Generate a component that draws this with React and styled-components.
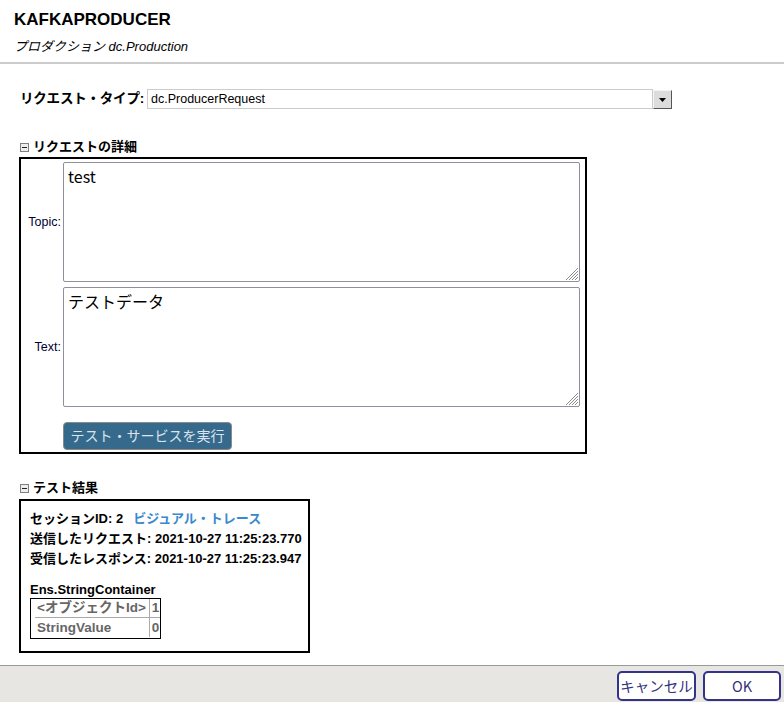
import React from "react";
import styled, { createGlobalStyle } from "styled-components";

const FONT = `"Liberation Sans", "Noto Sans CJK JP", sans-serif`;

const Global = createGlobalStyle`
  html, body { margin: 0; padding: 0; background: #fff; }
  body { font-family: ${FONT}; color: #000; }
  * { box-sizing: border-box; }
`;

const Page = styled.div`
  min-height: 100vh;
  display: flex;
  flex-direction: column;
`;

const Header = styled.header`
  padding: 9px 14px 7px;
  border-bottom: 2px solid #cccccc;
`;

const Title = styled.h1`
  margin: 0;
  font: bold 17px/22px ${FONT};
`;

const Subtitle = styled.div`
  margin-top: 7px;
  font: italic 13px/17px ${FONT};
`;

const Main = styled.main`
  flex: 1;
  padding: 25px 19px 0;
`;

const TypeRow = styled.div`
  display: flex;
  align-items: center;
  height: 20px;
`;

const TypeLabel = styled.span`
  margin-left: 1px;
  margin-right: 3px;
  font: bold 13.5px/20px ${FONT};
  letter-spacing: -0.2px;
`;

const Select = styled.div`
  width: 506px;
  height: 20px;
  border: 1px solid #cccccc;
  padding-left: 3px;
  display: flex;
  align-items: center;
  font: 12.5px/18px ${FONT};
`;

const DropButton = styled.div`
  width: 19px;
  height: 19px;
  margin-top: 1px;
  background: #dcdcdc;
  border-top: 1px solid #f4f4f4;
  border-left: 1px solid #f4f4f4;
  border-right: 1px solid #555;
  border-bottom: 1px solid #555;
  display: flex;
  align-items: center;
  justify-content: center;
`;

const SectionHeader = styled.div`
  display: flex;
  align-items: center;
  gap: 4px;
  margin-top: ${(p) => p.$top}px;
  margin-bottom: ${(p) => p.$bottom}px;
  margin-left: 1px;
  font: bold 13px/16px ${FONT};
`;

const DetailBox = styled.div`
  width: 568px;
  border: 2px solid #000;
  padding: 3px 5px 2px 0;
  display: grid;
  grid-template-columns: 40px 517px;
  column-gap: 2px;
  row-gap: 5px;
  align-items: center;
`;

const FieldLabel = styled.label`
  text-align: right;
  font: 12.5px/14px ${FONT};
  color: #000033;
`;

const AreaWrap = styled.div`
  position: relative;
  height: 120px;
`;

const Area = styled.textarea`
  display: block;
  width: 100%;
  height: 120px;
  border: 1px solid #8f8f9d;
  border-radius: 2px;
  padding: 3px 4px;
  font: 16px/20px "Noto Sans CJK JP", "DejaVu Sans", sans-serif;
  color: #000;
  resize: none;
  outline: none;
`;

const Grip = styled.svg`
  position: absolute;
  right: 2px;
  bottom: 2px;
  pointer-events: none;
`;

const RunButton = styled.button`
  grid-column: 2;
  justify-self: start;
  margin-top: 10px;
  width: 169px;
  height: 28px;
  background: #356a8d;
  border: 1px solid #8a8a8a;
  border-radius: 4px;
  color: #dce3ea;
  font: 14px/18px ${FONT};
  padding: 0;
`;

const ResultBox = styled.div`
  width: 291px;
  border: 2px solid #000;
  padding: 8px 10px 12px 9px;
`;

const Line = styled.div`
  font: bold 13px/20px ${FONT};
  white-space: nowrap;
`;

const Link = styled.a`
  margin-left: 10px;
  color: #3a89cf;
  text-decoration: none;
  font-weight: bold;
`;

const ClassName = styled.div`
  margin-top: 13px;
  font: bold 13px/16px ${FONT};
`;

const PropTable = styled.table`
  border: 1px solid #000;
  border-spacing: 0;
  padding: 0 0 1px 4px;
`;

const Cell = styled.td`
  height: 19px;
  padding: 0 ${(p) => (p.$value ? "1px" : "3px")} 0 2px;
  font: bold 13.5px/18px ${FONT};
  color: #666;
  white-space: nowrap;
  border-right: ${(p) => (p.$value ? "none" : "1px solid #aaa")};
  border-bottom: ${(p) => (p.$first ? "1px solid #aaa" : "none")};
`;

const Footer = styled.footer`
  border-top: 1px solid #999;
  background: #e8e6e2;
  padding: 5px 3px 1px;
  display: flex;
  justify-content: flex-end;
  gap: 7px;
`;

const FooterButton = styled.button`
  width: ${(p) => p.$w}px;
  height: 30px;
  border: 2px solid #33338a;
  border-radius: 5px;
  background: #fff;
  color: #33337a;
  font: 14.5px/18px "Noto Sans CJK JP", ${FONT};
  padding: 0;
  white-space: nowrap;
  overflow: hidden;
`;

const MinusIcon = () => (
  <svg width="9" height="9" viewBox="0 0 9 9">
    <rect x="0.5" y="0.5" width="8" height="8" fill="#eeeeee" stroke="#808080" />
    <rect x="2" y="4" width="5" height="1" fill="#222" />
  </svg>
);

const GripIcon = () => (
  <Grip width="13" height="13" viewBox="0 0 13 13">
    <g stroke="#8a8a8a" strokeWidth="1">
      <line x1="1" y1="13" x2="13" y2="1" />
      <line x1="4" y1="13" x2="13" y2="4" />
      <line x1="7" y1="13" x2="13" y2="7" />
      <line x1="10" y1="13" x2="13" y2="10" />
    </g>
  </Grip>
);

export default function App() {
  return (
    <Page>
      <Global />
      <Header>
        <Title>KAFKAPRODUCER</Title>
        <Subtitle>プロダクション dc.Production</Subtitle>
      </Header>
      <Main>
        <TypeRow>
          <TypeLabel>リクエスト・タイプ:</TypeLabel>
          <Select>dc.ProducerRequest</Select>
          <DropButton>
            <svg width="9" height="6" viewBox="0 0 9 6">
              <path d="M1 1 H8 L4.5 5 Z" fill="#000" />
            </svg>
          </DropButton>
        </TypeRow>

        <SectionHeader $top={30} $bottom={2}>
          <MinusIcon />
          リクエストの詳細
        </SectionHeader>
        <DetailBox>
          <FieldLabel>Topic:</FieldLabel>
          <AreaWrap>
            <Area defaultValue="test" />
            <GripIcon />
          </AreaWrap>
          <FieldLabel>Text:</FieldLabel>
          <AreaWrap>
            <Area defaultValue="テストデータ" />
            <GripIcon />
          </AreaWrap>
          <RunButton>テスト・サービスを実行</RunButton>
        </DetailBox>

        <SectionHeader $top={26} $bottom={3}>
          <MinusIcon />
          テスト結果
        </SectionHeader>
        <ResultBox>
          <Line>
            セッションID: 2<Link href="#">ビジュアル・トレース</Link>
          </Line>
          <Line>送信したリクエスト: 2021-10-27 11:25:23.770</Line>
          <Line>受信したレスポンス: 2021-10-27 11:25:23.947</Line>
          <ClassName>Ens.StringContainer</ClassName>
          <PropTable>
            <tbody>
              <tr>
                <Cell $first>&lt;オブジェクトId&gt;</Cell>
                <Cell $first $value>1</Cell>
              </tr>
              <tr>
                <Cell>StringValue</Cell>
                <Cell $value>0</Cell>
              </tr>
            </tbody>
          </PropTable>
        </ResultBox>
      </Main>
      <Footer>
        <FooterButton $w={79}>キャンセル</FooterButton>
        <FooterButton $w={78}>OK</FooterButton>
      </Footer>
    </Page>
  );
}
